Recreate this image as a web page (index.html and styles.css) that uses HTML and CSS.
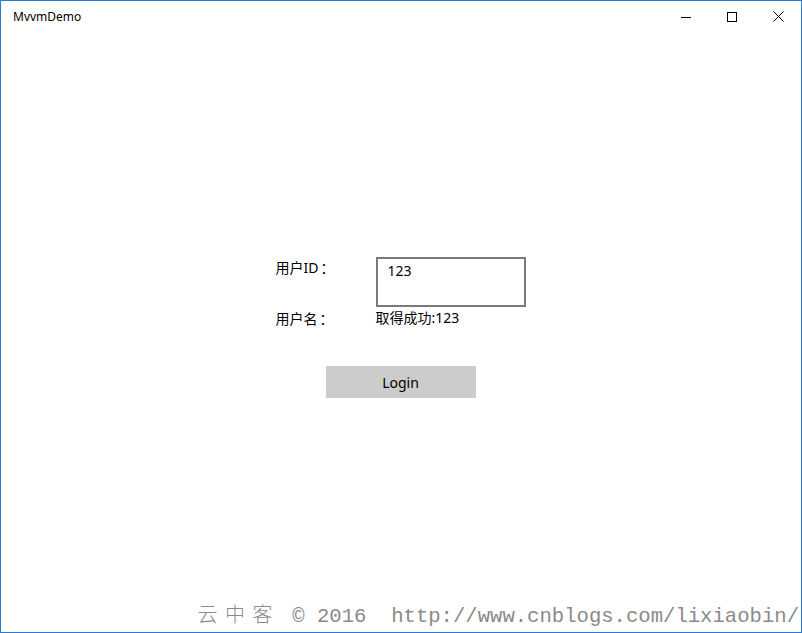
FILE: index.html
```html
<!DOCTYPE html>
<html lang="zh-CN">
  <head>
    <meta charset="UTF-8" />
    <title>MvvmDemo</title>
    <link rel="stylesheet" href="styles.css">
  </head>
  <body>
    <div class="window">
      <header class="titlebar">
        <span class="title">MvvmDemo</span>
        <div class="caption">
          <button class="cap-btn">
            <svg width="10" height="10" viewBox="0 0 10 10"><path d="M0 5.5h10" stroke="#000" stroke-width="1"/></svg>
          </button>
          <button class="cap-btn">
            <svg width="10" height="10" viewBox="0 0 10 10"><rect x="0.5" y="0.5" width="9" height="9" fill="none" stroke="#000" stroke-width="1"/></svg>
          </button>
          <button class="cap-btn">
            <svg width="11" height="11" viewBox="0 0 11 11"><path d="M0.5 0.5l10 10M10.5 0.5l-10 10" stroke="#000" stroke-width="1"/></svg>
          </button>
        </div>
      </header>

      <main class="content">
        <div class="form">
          <label class="label">用户ID<span class="colon">：</span></label>
          <div class="textbox">123</div>
          <span class="label">用户名<span class="colon">：</span></span>
          <span class="value">取得成功:123</span>
        </div>
        <button class="login">Login</button>
      </main>

      <div class="watermark"><span class="cjk">云中客</span> © 2016  http://www.cnblogs.com/lixiaobin/</div>
    </div>
  </body>
</html>
```

FILE: styles.css
```css
html, body {
  margin: 0;
  padding: 0;
  background: #fff;
}
body {
  font-family: "Segoe UI", "Noto Sans", "Noto Sans CJK SC", sans-serif;
  color: #000;
}
.window {
  position: relative;
  width: 802px;
  height: 633px;
  box-sizing: border-box;
  border: 1px solid #2b7bd4;
  display: flex;
  flex-direction: column;
  overflow: hidden;
}
.titlebar {
  height: 31px;
  display: flex;
  align-items: center;
  justify-content: space-between;
}
.title {
  font-size: 12px;
  margin-left: 12px;
  margin-top: -1px;
}
.caption {
  display: flex;
  height: 31px;
}
.cap-btn {
  width: 46px;
  height: 31px;
  border: none;
  background: transparent;
  padding: 0;
  display: flex;
  align-items: center;
  justify-content: center;
}
.content {
  flex: 1;
  display: flex;
  flex-direction: column;
  align-items: center;
  padding-top: 225px;
}
.form {
  display: grid;
  grid-template-columns: 100px 150px;
  row-gap: 1px;
  font-size: 14px;
  line-height: 20px;
  margin-right: 1px;
}
.colon {
  font-family: "Noto Sans CJK JP", sans-serif;
  margin-left: 2px;
}
.textbox {
  border: 2px solid #7a7a7a;
  padding: 2px 10px 0;
  height: 44px;
  width: 126px;
}
.login {
  margin-top: 37px;
  width: 150px;
  height: 32px;
  background: #cccccc;
  border: none;
  font-family: inherit;
  font-size: 14px;
  color: #000;
  padding: 0;
  margin-right: 1px;
}
.watermark {
  position: absolute;
  right: 2px;
  bottom: 4px;
  font-family: "Liberation Mono", "Noto Sans CJK SC", monospace;
  font-size: 20.6px;
  color: #8a8a8a;
  white-space: pre;
}
.watermark .cjk {
  font-family: "Noto Sans CJK SC", serif;
  font-weight: 300;
  letter-spacing: 7.5px;
  font-size: 20px;
}
```
